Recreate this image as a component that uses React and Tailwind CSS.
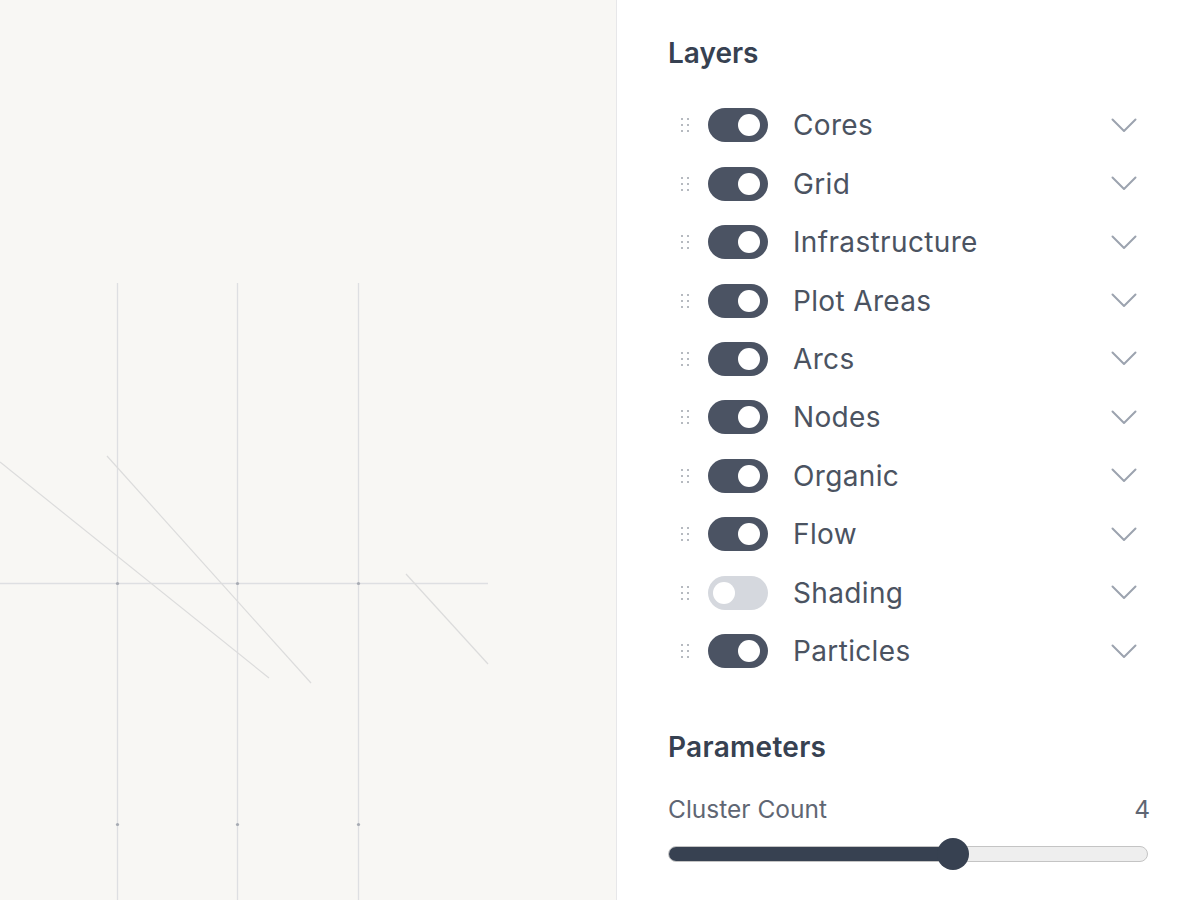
import React, { useState } from 'react';

const initialLayers = [
  { id: 'cores', name: 'Cores', on: true },
  { id: 'grid', name: 'Grid', on: true },
  { id: 'infra', name: 'Infrastructure', on: true },
  { id: 'plots', name: 'Plot Areas', on: true },
  { id: 'arcs', name: 'Arcs', on: true },
  { id: 'nodes', name: 'Nodes', on: true },
  { id: 'organic', name: 'Organic', on: true },
  { id: 'flow', name: 'Flow', on: true },
  { id: 'shading', name: 'Shading', on: false },
  { id: 'particles', name: 'Particles', on: true },
];

const DragHandle = () => (
  <div className="grid grid-cols-2 gap-x-[4px] gap-y-[4px] w-[8px]">
    {[0, 1, 2, 3, 4, 5].map((i) => (
      <span key={i} className="block w-[2px] h-[2px] rounded-full bg-[#9ea3ab]" />
    ))}
  </div>
);

const Chevron = () => (
  <svg width="26" height="15" viewBox="0 0 26 15" fill="none" className="block">
    <polyline points="1.5,1.5 13,13 24.5,1.5" stroke="#9ca3af" strokeWidth="2" strokeLinecap="round" strokeLinejoin="round" />
  </svg>
);

const Toggle = ({ on, onClick }) => (
  <button
    type="button"
    onClick={onClick}
    className={`relative block w-[60px] h-[34px] rounded-full shrink-0 transition-colors ${on ? 'bg-[#4b5363]' : 'bg-[#d5d8de]'}`}
  >
    <span
      className={`absolute top-[6px] w-[22px] h-[22px] rounded-full bg-white transition-all ${on ? 'left-[30px]' : 'left-[5px]'}`}
    />
  </button>
);

const Canvas = () => (
  <div className="flex-1 h-full bg-[#f8f7f4] overflow-hidden">
    <svg width="616" height="900" viewBox="0 0 616 900" className="block">
      <g stroke="#dedfe2" strokeWidth="1.3">
        <line x1="117.5" y1="283" x2="117.5" y2="900" />
        <line x1="237.5" y1="283" x2="237.5" y2="900" />
        <line x1="358.5" y1="283" x2="358.5" y2="900" />
        <line x1="0" y1="583.5" x2="488" y2="583.5" />
      </g>
      <g stroke="#dcdcdc" strokeWidth="1.2">
        <line x1="0" y1="462" x2="269" y2="678" />
        <line x1="107" y1="456" x2="311" y2="683" />
        <line x1="406" y1="574" x2="488" y2="664" />
      </g>
      <g fill="#a7abb3">
        <circle cx="117.5" cy="583.5" r="1.6" />
        <circle cx="237.5" cy="583.5" r="1.6" />
        <circle cx="358.5" cy="583.5" r="1.6" />
        <circle cx="117.5" cy="824.5" r="1.6" />
        <circle cx="237.5" cy="824.5" r="1.6" />
        <circle cx="358.5" cy="824.5" r="1.6" />
      </g>
    </svg>
  </div>
);

const Slider = ({ label, value, min, max }) => {
  const pct = ((value - min) / (max - min)) * 100;
  return (
    <div>
      <div className="flex justify-between items-center h-[32px] text-[24.5px] leading-[32px] text-[#5f6673]">
        <span>{label}</span>
        <span className="-mr-[2px]">{value}</span>
      </div>
      <div className="relative h-[32px] mt-[13px] flex items-center">
        <div className="w-full h-[16px] rounded-full bg-[#eeeeee] border border-[#c4c4c4] overflow-hidden">
          <div className="h-full bg-[#374151]" style={{ width: `calc(16px + (100% - 32px) * ${pct / 100})` }} />
        </div>
        <div
          className="absolute top-0 w-[32px] h-[32px] rounded-full bg-[#374151]"
          style={{ left: `calc((100% - 32px) * ${pct / 100})` }}
        />
      </div>
    </div>
  );
};

export default function App() {
  const [layers, setLayers] = useState(initialLayers);

  const toggle = (id) =>
    setLayers(layers.map((l) => (l.id === id ? { ...l, on: !l.on } : l)));

  return (
    <div className="flex w-[1200px] h-[900px] overflow-hidden font-['Inter',sans-serif]">
      <Canvas />

      <div className="w-[584px] h-full shrink-0 bg-white border-l border-[#e7e7e9] pl-[51px] pr-[52px] pt-[35px]">
        <h2 className="text-[28px] leading-[36px] font-semibold text-[#374151] mb-[25px]">Layers</h2>

        <div>
          {layers.map((layer) => (
            <div key={layer.id} className="flex items-center h-[58.44px] pl-[13px] pr-[11px]">
              <DragHandle />
              <div className="ml-[19px] flex items-center">
                <Toggle on={layer.on} onClick={() => toggle(layer.id)} />
              </div>
              <span className="ml-[25px] flex-1 text-[28px] leading-[34px] tracking-[0.35px] text-[#4b5361]">{layer.name}</span>
              <Chevron />
            </div>
          ))}
        </div>

        <h2 className="mt-[49px] text-[28px] leading-[36px] font-semibold tracking-[0.3px] text-[#374151] mb-[28px]">Parameters</h2>

        <Slider label="Cluster Count" value={4} min={1} max={6} />
      </div>
    </div>
  );
}
